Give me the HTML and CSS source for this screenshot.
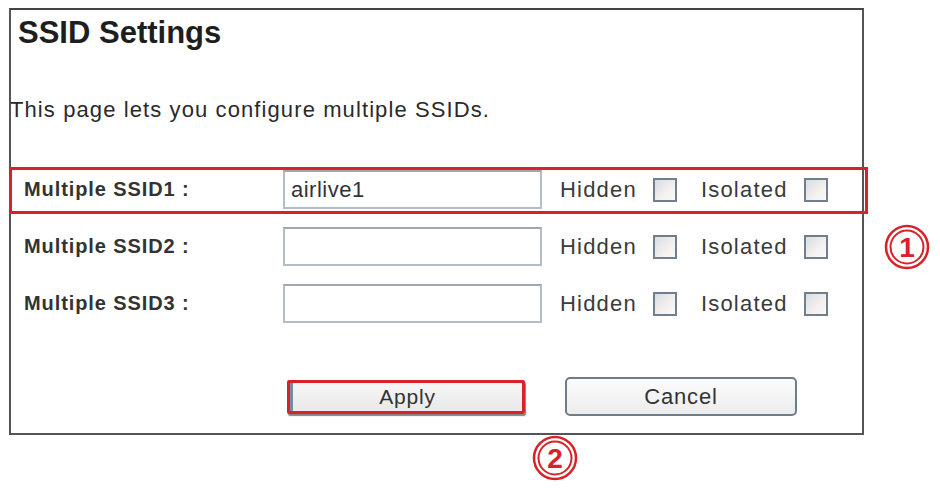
FILE: index.html
```html
<!DOCTYPE html>
<html lang="en">
<head>
    <meta charset="UTF-8">
    <meta name="viewport" content="width=device-width, initial-scale=1.0">
    <title>SSID Settings</title>
    <link rel="stylesheet" href="styles.css">
</head>
<body>
    <div class="page">
        <div class="panel">
            <h1>SSID Settings</h1>
            <p class="intro">This page lets you configure multiple SSIDs.</p>

            <div class="ssid-list">
                <div class="ssid-row marked">
                    <label for="ssid1">Multiple SSID1 :</label>
                    <input type="text" id="ssid1" value="airlive1" />
                    <span class="opt">Hidden</span><span class="box"></span>
                    <span class="opt">Isolated</span><span class="box"></span>
                </div>
                <div class="ssid-row">
                    <label for="ssid2">Multiple SSID2 :</label>
                    <input type="text" id="ssid2" />
                    <span class="opt">Hidden</span><span class="box"></span>
                    <span class="opt">Isolated</span><span class="box"></span>
                </div>
                <div class="ssid-row">
                    <label for="ssid3">Multiple SSID3 :</label>
                    <input type="text" id="ssid3" />
                    <span class="opt">Hidden</span><span class="box"></span>
                    <span class="opt">Isolated</span><span class="box"></span>
                </div>
            </div>

            <div class="actions">
                <span class="marked-btn"><button type="button">Apply</button></span>
                <button type="button">Cancel</button>
            </div>
        </div>

        <!-- numbered callouts -->
        <svg class="callout callout-1" width="46" height="46" viewBox="0 0 46 46">
            <circle cx="23" cy="23" r="21" fill="none" stroke="#d8222a" stroke-width="2.5"/>
            <circle cx="23" cy="23" r="16.5" fill="none" stroke="#d8222a" stroke-width="2"/>
            <text x="23" y="33" text-anchor="middle">1</text>
        </svg>
        <svg class="callout callout-2" width="46" height="46" viewBox="0 0 46 46">
            <circle cx="23" cy="23" r="21" fill="none" stroke="#d8222a" stroke-width="2.5"/>
            <circle cx="23" cy="23" r="16.5" fill="none" stroke="#d8222a" stroke-width="2"/>
            <text x="23" y="33" text-anchor="middle">2</text>
        </svg>
    </div>
</body>
</html>
```

FILE: styles.css
```css
body {
    margin: 0;
    background: #fff;
    font-family: "Liberation Sans", Arial, sans-serif;
    color: #2a2a2a;
}

.page {
    position: relative;
    box-sizing: border-box;
    width: 940px;
    height: 490px;
    padding: 8px 0 0 9px;
}

.panel {
    width: 851px;
    height: 423px;
    border: 2px solid #555;
    border-top-color: #444;
}

.panel h1 {
    margin: 0;
    padding: 6px 0 0 7px;
    font-size: 31px;
    line-height: 34px;
    font-weight: bold;
    color: #1e1e1e;
}

.intro {
    margin: 47px 0 0 -1px;
    font-size: 22px;
    letter-spacing: 1.1px;
    line-height: 26px;
}

.ssid-list {
    margin-top: 44px;
}

/* one row per SSID: label, name field, two flags */
.ssid-row {
    box-sizing: border-box;
    display: flex;
    align-items: center;
    height: 47px;
    margin: 0 -6px 10px -2px;
    padding: 0 0 2px 12px;
    border: 3px solid transparent;
}

.ssid-row.marked {
    border-color: #d8222a;
}

.ssid-row label {
    width: 259px;
    font-size: 20px;
    font-weight: bold;
    letter-spacing: 0.9px;
    color: #333;
}

.ssid-row input {
    box-sizing: border-box;
    width: 259px;
    height: 39px;
    margin: 0 18px 0 0;
    padding: 0 6px;
    border: 2px solid #b5bcc4;
    border-top-color: #a0a7b0;
    font-family: "Liberation Sans", Arial, sans-serif;
    font-size: 22px;
    letter-spacing: 0.5px;
    color: #333;
    outline: none;
}

.opt {
    font-size: 22px;
    letter-spacing: 1.2px;
    color: #3a3a3a;
}

.box {
    box-sizing: border-box;
    width: 24px;
    height: 24px;
    margin: 0 24px 0 16px;
    border: 2px solid #6f7f8f;
    background: linear-gradient(135deg, #d8dde3, #f4f0ee 60%, #fafafa);
}

.actions {
    display: flex;
    align-items: center;
    margin-top: 49px;
    padding-left: 276px;
}

.actions button {
    width: 232px;
    height: 39px;
    border: 2px solid #6d7d8e;
    border-radius: 5px;
    background: linear-gradient(#fcfcfc, #ececec);
    font-family: "Liberation Sans", Arial, sans-serif;
    font-size: 22px;
    letter-spacing: 0.8px;
    color: #333;
}

.marked-btn {
    display: flex;
    margin-right: 40px;
    border: 3px solid #d8222a;
    border-radius: 2px;
    box-shadow: 1px 2px 1px rgba(60, 40, 60, 0.6);
}

.marked-btn button {
    width: 232px;
    height: 28px;
    border: 0;
    border-left: 3px solid #7a8aa0;
    border-radius: 0;
    background: linear-gradient(#f6f6f6, #e9e9e9);
    font-size: 21px;
    line-height: 20px;
}

.callout {
    position: absolute;
}

.callout text {
    font-family: "Liberation Sans", Arial, sans-serif;
    font-size: 28px;
    font-weight: bold;
    fill: #d8222a;
}

.callout-1 {
    left: 884px;
    top: 224px;
}

.callout-2 {
    left: 532px;
    top: 435px;
}
```
